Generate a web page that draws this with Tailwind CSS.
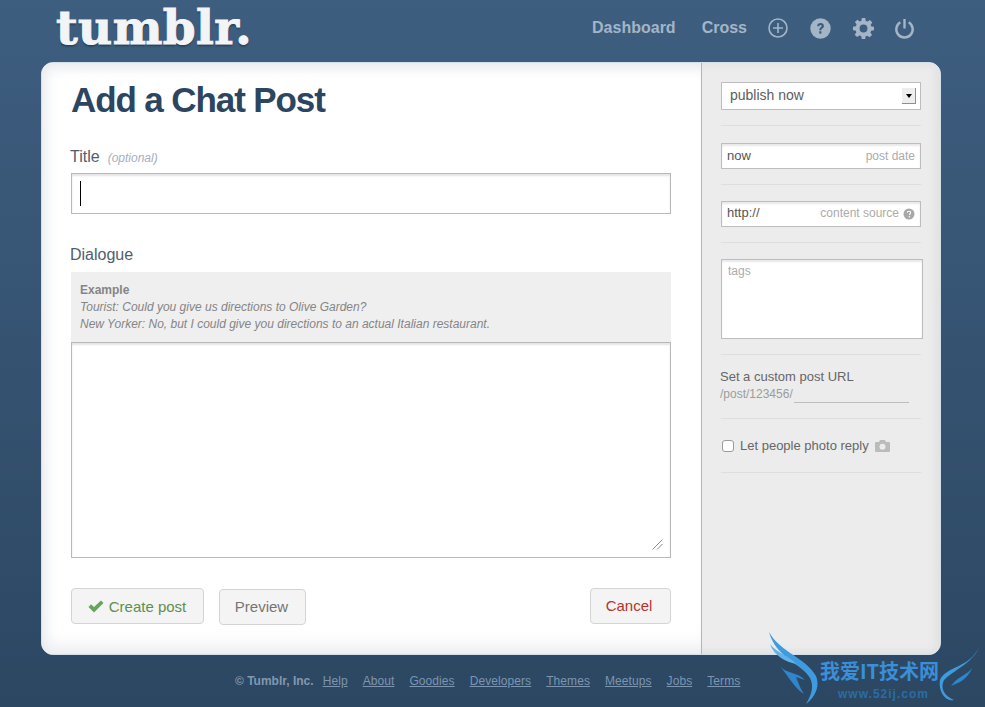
<!DOCTYPE html>
<html lang="en">

<head>
  <meta charset="UTF-8">
  <meta name="viewport" content="width=device-width, initial-scale=1.0">
  <title>Add a Chat Post</title>
  <script src="https://cdn.jsdelivr.net/npm/@tailwindcss/browser@4"></script>
</head>

<body class="relative h-[707px] w-[985px] overflow-hidden bg-linear-to-b from-[#3e5e80] to-[#2c4762] font-['Liberation_Sans',Arial,sans-serif]">
  <!-- header -->
  <header class="flex h-[62px] items-center pl-[56px] pr-[70px]">
    <a class="mb-[8px] font-['DejaVu_Serif',serif] text-[47px] leading-none font-bold tracking-[0.4px] text-[#f2f4f5] [-webkit-text-stroke:1px_#f2f4f5] [text-shadow:0_2px_2px_rgba(0,0,0,0.35)]">tumblr.</a>
    <nav class="ml-auto mb-[6px] flex items-center text-[#a3b5c7]">
      <a class="text-base font-bold">Dashboard</a>
      <a class="ml-[26px] text-base font-bold">Cross</a>
      <svg class="ml-[21px]" width="20" height="20" viewBox="0 0 20 20" fill="none" stroke="currentColor" stroke-width="1.6">
        <circle cx="10" cy="10" r="9" />
        <path d="M10 5v10M5 10h10" />
      </svg>
      <svg class="ml-[22px]" width="21" height="21" viewBox="0 0 21 21">
        <circle cx="10.5" cy="10.5" r="10.2" fill="currentColor" />
        <path d="M7.2 8.2c0-2 1.5-3.1 3.4-3.1 2 0 3.3 1.1 3.3 2.8 0 2.4-2.6 2.3-2.6 4.3H9.300c0-2.900 2.300-2.900 2.300-4.200 0-.7-.4-1.100-1.100-1.100-.7 0-1.100.5-1.100 1.300z" fill="#3c5c7c" />
        <rect x="9.200" y="13.300" width="2.200" height="2.300" fill="#3c5c7c" />
      </svg>
      <svg class="ml-[22px]" width="21" height="21" viewBox="0 0 24 24" fill="currentColor">
        <path fill-rule="evenodd" d="M10 0h4l.6 3.300 1.900.8L19.300 2.200l2.800 2.800-1.900 2.800.8 1.900L24 10v4l-3.300.6-.8 1.900 1.900 2.800-2.800 2.800-2.800-1.900-1.900.8L14 24h-4l-.6-3.300-1.900-.8-2.800 1.900-2.800-2.800 1.900-2.800-.8-1.900L0 14v-4l3.300-.6.8-1.900L2.200 4.700 5 2l2.800 1.900 1.900-.8zM12 7.500a4.500 4.500 0 1 0 0 9 4.500 4.500 0 0 0 0-9z" />
      </svg>
      <svg class="ml-[20px]" width="21" height="21" viewBox="0 0 21 21" fill="none" stroke="currentColor" stroke-width="2.400">
        <path d="M6.300 4.300a8.200 8.200 0 1 0 8.400 0" />
        <path d="M10.500 1v9.500" />
      </svg>
    </nav>
  </header>

  <!-- card -->
  <main class="ml-[41px] flex h-[593px] w-[900px] overflow-hidden rounded-[12px] border border-[#d5dfe8] bg-white">
    <section class="w-[659px] shrink-0 bg-white px-[29px] shadow-[inset_0_14px_14px_-10px_#e4e6ea,inset_14px_0_14px_-10px_#e8eaee,inset_0_-20px_20px_-14px_#e8e9ec]">
      <h1 class="mt-[15px] text-[35px] leading-[44px] font-bold tracking-[-1.1px] text-[#2c4560]">Add a Chat Post</h1>

      <div class="mt-[25px] -ml-px flex items-baseline text-[#4f5e6b]">
        <label class="text-base leading-[20px]">Title</label>
        <span class="ml-[8px] text-xs text-[#a4b0c0] italic">(optional)</span>
      </div>
      <div class="mt-[6px] flex h-[41px] w-[600px] items-center border border-[#b9b9b9] pl-[8px] shadow-[inset_0_2px_2px_#e4e4e4]">
        <div class="h-[25px] w-px bg-black"></div>
      </div>

      <label class="mt-[31px] -ml-px block text-base leading-[20px] text-[#4f5e6b]">Dialogue</label>
      <div class="mt-[7px] h-[70px] w-[600px] bg-[#efefef] px-[9px] pt-[10px] text-xs leading-[17px] text-[#858585]">
        <div class="font-bold">Example</div>
        <div class="italic">Tourist: Could you give us directions to Olive Garden?</div>
        <div class="italic">New Yorker: No, but I could give you directions to an actual Italian restaurant.</div>
      </div>
      <div class="relative h-[216px] w-[600px] border border-[#b9b9b9] shadow-[inset_0_2px_2px_#e4e4e4]">
        <svg class="absolute right-[7px] bottom-[7px]" width="11" height="11" viewBox="0 0 11 11" stroke="#8a8a8a" fill="none">
          <path d="M0.500 10.500 10.500 0.500M5 10.500l5.500-5.500" />
        </svg>
      </div>

      <div class="mt-[30px] flex w-[600px] items-start">
        <button class="flex h-[36px] w-[133px] items-center justify-center rounded-[4px] border border-[#d4d4d4] bg-[#f4f4f4] pt-[2px] pr-px text-[15px] text-[#5f8f4e]">
          <svg class="mr-[5px] -mt-[2px]" width="16" height="13" viewBox="0 0 16 13" fill="#65a55c">
            <path d="M0.500 7 3 4.300 6 7 13 0.500 15.500 3 6 12.500z" />
          </svg>
          Create post
        </button>
        <button class="mt-px ml-[15px] h-[36px] w-[87px] rounded-[4px] border border-[#d4d4d4] bg-[#f4f4f4] pr-[2px] text-[15px] text-[#757575]">Preview</button>
        <button class="ml-auto h-[36px] w-[81px] rounded-[4px] border border-[#d4d4d4] bg-[#f4f4f4] pr-[3px] text-[15px] text-[#b8322a]">Cancel</button>
      </div>
    </section>

    <!-- sidebar -->
    <aside class="flex-1 border-l border-[#b5b5b5] bg-[#ececec] pt-[19px] pl-[19px] shadow-[inset_-10px_0_10px_-6px_#e0e0e0,inset_0_10px_10px_-8px_#e0e0e0,inset_0_-10px_10px_-8px_#dedede]">
      <div class="flex h-[28px] w-[200px] items-center justify-between border border-[#bdbdbd] bg-white pr-[4px] pl-[8px] text-sm text-[#5d5d5d]">
        <span class="-mt-[2px]">publish now</span>
        <div class="flex h-[16px] w-[14px] items-center justify-center border-r border-b border-[#8f8f8f] bg-[#eeeeee]">
          <div class="h-0 w-0 border-x-[3px] border-t-[4px] border-x-transparent border-t-black"></div>
        </div>
      </div>
      <div class="mt-[15px] h-px w-[200px] bg-[#dedede]"></div>

      <div class="mt-[17px] flex h-[26px] w-[200px] items-center justify-between border border-[#bdbdbd] bg-white pr-[5px] pl-[5px] text-xs text-[#555555] shadow-[inset_0_2px_2px_#e8e8e8]">
        <span class="text-[13px]">now</span>
        <span class="text-[12px] text-[#ababab]">post date</span>
      </div>
      <div class="mt-[15px] h-px w-[200px] bg-[#dedede]"></div>

      <div class="mt-[16px] flex h-[26px] w-[200px] items-center border border-[#bdbdbd] bg-white pr-[5px] pb-[2px] pl-[5px] text-xs text-[#555555] shadow-[inset_0_2px_2px_#e8e8e8]">
        <span class="text-[13px]">http://</span>
        <span class="ml-auto text-[12px] text-[#ababab]">content source</span>
        <svg class="mt-[2px] ml-[4px]" width="12" height="12" viewBox="0 0 12 12">
          <circle cx="6" cy="6" r="5.500" fill="#a8a8a8" />
          <path d="M4.300 4.700c0-1 .8-1.500 1.700-1.500s1.700.5 1.700 1.400c0 1.200-1.300 1.100-1.300 2.300" fill="none" stroke="#fff" stroke-width="1.100" />
          <circle cx="6.300" cy="8.700" r=".7" fill="#fff" />
        </svg>
      </div>
      <div class="mt-[15px] h-px w-[200px] bg-[#dedede]"></div>

      <div class="mt-[16px] h-[80px] w-[202px] border border-[#bdbdbd] bg-white pt-[3px] pl-[6px] text-xs text-[#ababab] shadow-[inset_0_2px_2px_#e8e8e8]">tags</div>
      <div class="mt-[15px] h-px w-[200px] bg-[#dedede]"></div>

      <div class="mt-[14px] -ml-px text-[13px] leading-[15px] text-[#666666]">Set a custom post URL</div>
      <div class="mt-[3px] -ml-px flex h-[16px] w-[189px] text-[12px] leading-[14px] text-[#9c9c9c]">
        /post/123456/
        <div class="ml-px flex-1 border-b border-[#bdbdbd]"></div>
      </div>
      <div class="mt-[15px] h-px w-[200px] bg-[#dedede]"></div>

      <div class="mt-[19px] flex h-[16px] items-center text-xs text-[#666666]">
        <div class="ml-px h-[12px] w-[12px] rounded-[3px] border border-[#9a9a9a] bg-white"></div>
        <span class="ml-[6px] text-[13px]">Let people photo reply</span>
        <svg class="ml-[6px]" width="15" height="12" viewBox="0 0 15 12" fill="#bbbbbb">
          <path fill-rule="evenodd" d="M1 2h3l1-2h5l1 2h3a1 1 0 0 1 1 1v8a1 1 0 0 1-1 1H1a1 1 0 0 1-1-1V3a1 1 0 0 1 1-1zM7.500 3.800a3 3 0 1 0 0 6 3 3 0 0 0 0-6z" />
        </svg>
      </div>
      <div class="mt-[18px] h-px w-[200px] bg-[#dedede]"></div>
    </aside>
  </main>

  <!-- footer -->
  <footer class="mt-[18px] ml-[235px] flex items-center text-xs tracking-[0.08px] text-[#7c95b0]">
    <span class="mr-[9px] font-bold tracking-normal text-[#8298ae]">© Tumblr, Inc.</span>
    <a class="mr-[15px] underline">Help</a>
    <a class="mr-[15px] underline">About</a>
    <a class="mr-[15px] underline">Goodies</a>
    <a class="mr-[15px] underline">Developers</a>
    <a class="mr-[15px] underline">Themes</a>
    <a class="mr-[15px] underline">Meetups</a>
    <a class="mr-[15px] underline">Jobs</a>
    <a class="underline">Terms</a>
  </footer>

  <!-- watermark over the corner -->
  <div class="absolute top-[630px] left-[768px] h-[77px] w-[217px]">
    <svg class="absolute inset-0" width="217" height="77" viewBox="0 0 217 77" fill="#3f9be0">
      <path d="M1 2C12 22 38 28 48 46C52 56 48 66 38 74C44 64 46 56 42 48C34 34 8 28 1 2z" />
      <path d="M2 14C10 24 22 26 28 34C18 32 6 26 2 14z" fill="#5fb2ea" />
      <path d="M12 36C18 44 30 42 37 50L28 47C31 54 32 58 36 64C28 60 20 46 12 36z" fill="#2f86cc" />
      <path d="M211 17C206 32 186 40 176 50C172 58 176 66 186 70C178 72 170 62 172 50C178 36 202 38 211 17z" />
      <path d="M204 38C198 46 190 46 183 56L192 52C196 50 202 44 204 38z" fill="#2f86cc" />
    </svg>
    <div class="absolute top-[30px] left-[52px] font-['Noto_Sans_CJK_SC',sans-serif] text-[20px] leading-[22px] font-bold whitespace-nowrap text-[#3a8fd8]">我爱IT技术网</div>
    <div class="absolute top-[58px] left-[70px] text-[12px] leading-[12px] font-bold tracking-[1px] text-[#2a6ca8]">www.52ij.com</div>
  </div>
</body>

</html>
